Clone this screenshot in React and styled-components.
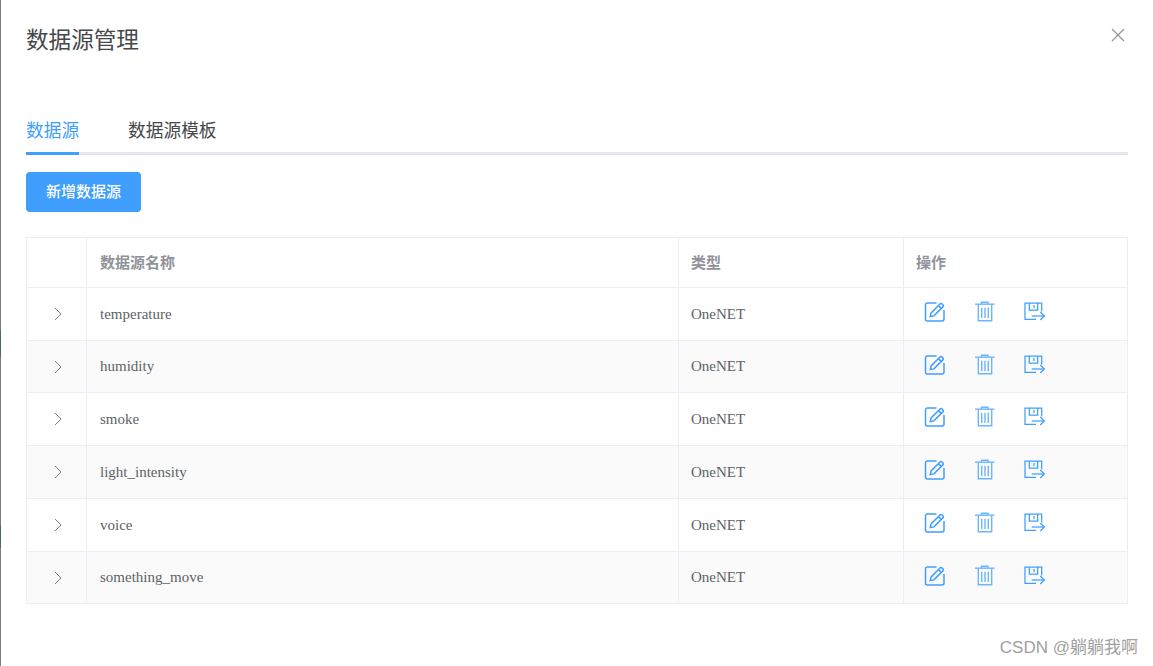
import React from "react";
import styled, { createGlobalStyle } from "styled-components";

const GlobalStyle = createGlobalStyle`
  html, body {
    margin: 0;
    padding: 0;
    background: #fff;
  }
  body {
    font-family: "Liberation Serif", "Noto Sans CJK SC", serif;
    overflow: hidden;
  }
`;

const Dialog = styled.div`
  position: relative;
  width: 1153px;
  height: 666px;
  box-sizing: border-box;
  padding: 0 25px 0 25px;
  border-left: 1px solid #7d7d7d;
  background: #fff;

  &::before {
    content: "";
    position: absolute;
    left: -1px;
    top: 0;
    width: 1px;
    height: 100%;
    background: linear-gradient(
      #7d7d7d 330px,
      #4c6b68 330px,
      #4c6b68 357px,
      #7d7d7d 357px,
      #7d7d7d 525px,
      #4c6b68 525px,
      #4c6b68 548px,
      #7d7d7d 548px
    );
  }
`;

const Header = styled.header`
  display: flex;
  align-items: flex-start;
  justify-content: space-between;
  height: 105px;
  padding-top: 24px;
  box-sizing: border-box;
`;

const Title = styled.h2`
  margin: 0;
  font: 400 22.6px/30px "Noto Sans CJK SC", sans-serif;
  color: #45474b;
`;

const Close = styled.button`
  display: flex;
  border: 0;
  padding: 0;
  margin: 4px 3px 0 0;
  background: none;
  color: #909399;
`;

const Tabs = styled.div`
  display: flex;
  gap: 49px;
  height: 47px;
  border-bottom: 3px solid #e4e7ed;
`;

const Tab = styled.div`
  height: 50px;
  box-sizing: border-box;
  padding-top: 10px;
  font: 400 17.7px/28px "Noto Sans CJK SC", sans-serif;
  color: ${(p) => (p.$active ? "#409eff" : "#45474b")};
  border-bottom: 3px solid ${(p) => (p.$active ? "#409eff" : "transparent")};
`;

const AddButton = styled.button`
  display: block;
  width: 115px;
  height: 40px;
  margin: 17px 0 25px;
  padding: 0 0 2px;
  border: 0;
  border-radius: 4px;
  background: #409eff;
  color: #fff;
  font: 500 15px/38px "Noto Sans CJK SC", sans-serif;
`;

const Table = styled.div`
  display: grid;
  grid-template-columns: 60px 592px 225px 223px;
  width: 1102px;
  box-sizing: border-box;
  border: 1px solid #ebeef5;
  border-bottom: 0;
`;

const Row = styled.div`
  display: contents;
`;

const Cell = styled.div`
  display: flex;
  align-items: center;
  box-sizing: border-box;
  height: ${(p) => p.$h}px;
  padding-left: ${(p) => p.$pad ?? 12}px;
  border-bottom: 1px solid #ebeef5;
  border-right: ${(p) => (p.$last ? "0" : "1px solid #ebeef5")};
  background: ${(p) => (p.$striped ? "#fafafa" : "#fff")};
  font-size: 15px;
  color: #606266;
`;

const HeadCell = styled(Cell)`
  padding-bottom: 2px;
  font: 700 15px "Noto Sans CJK SC", sans-serif;
  color: #909399;
`;

const Expand = styled(Cell)`
  justify-content: center;
  padding-left: 2px;
  color: #7c7f85;
`;

const Actions = styled.div`
  display: flex;
  gap: 26px;
  margin: -4px 0 0 7px;
  color: #409eff;
`;

const Watermark = styled.div`
  position: absolute;
  right: 15px;
  bottom: 7px;
  font: 400 17px/22px "Liberation Sans", "Noto Sans CJK SC", sans-serif;
  color: #a0a0a0;
`;

const EditIcon = () => (
  <svg width="24" height="24" viewBox="0 0 24 24" fill="none" stroke="currentColor" strokeWidth="1.5">
    <path d="M13.5 3H4.5a2 2 0 0 0-2 2v14a2 2 0 0 0 2 2h14.5a2 2 0 0 0 2-2V10" />
    <path d="M7.2 16.6l.9-3.6 8.9-9a1.4 1.4 0 0 1 2 0l.9.9a1.4 1.4 0 0 1 0 2l-9 9z" />
    <path d="M15.4 5.6l3 3" />
  </svg>
);

const TrashIcon = () => (
  <svg width="24" height="24" viewBox="0 0 24 24" fill="none" stroke="#6db5ff" strokeWidth="1.4">
    <path d="M2 4.2h19.5" />
    <path d="M8.5 4V2.3h6.5V4" />
    <path d="M5.3 4.5v16.2h13.4V4.5" />
    <path d="M8.7 7.7V18M12 7.7V18M15.3 7.7V18" />
  </svg>
);

const ExportIcon = () => (
  <svg width="24" height="24" viewBox="0 0 24 24" fill="none" stroke="currentColor" strokeWidth="1.25">
    <path d="M18.7 11.5V3H2v16.3h11" />
    <path d="M6.3 3v7h8.4V3" />
    <path d="M11 5v3" />
    <path d="M8.7 16h12.6" />
    <path d="M17.3 12l4 4-4 4" />
  </svg>
);

const rowHeights = [53, 52, 53, 53, 53, 52];
const rows = ["temperature", "humidity", "smoke", "light_intensity", "voice", "something_move"];

export default function App() {
  return (
    <>
      <GlobalStyle />
      <Dialog>
        <Header>
          <Title>数据源管理</Title>
          <Close aria-label="关闭">
            <svg width="14" height="14" viewBox="0 0 14 14" stroke="currentColor" strokeWidth="1.2">
              <path d="M1 1l12 12M13 1L1 13" />
            </svg>
          </Close>
        </Header>
        <Tabs>
          <Tab $active>数据源</Tab>
          <Tab>数据源模板</Tab>
        </Tabs>
        <AddButton>新增数据源</AddButton>
        <Table>
          <Row>
            <HeadCell $h={50} />
            <HeadCell $h={50} $pad={13}>数据源名称</HeadCell>
            <HeadCell $h={50}>类型</HeadCell>
            <HeadCell $h={50} $last>操作</HeadCell>
          </Row>
          {rows.map((name, i) => (
            <Row key={name}>
              <Expand $h={rowHeights[i]} $striped={i % 2 === 1}>
                <svg width="12" height="14" viewBox="0 0 12 14" fill="none" stroke="currentColor" strokeWidth="1">
                  <path d="M3 1l6 6-6 6" />
                </svg>
              </Expand>
              <Cell $h={rowHeights[i]} $pad={13} $striped={i % 2 === 1}>{name}</Cell>
              <Cell $h={rowHeights[i]} $striped={i % 2 === 1}>OneNET</Cell>
              <Cell $h={rowHeights[i]} $striped={i % 2 === 1} $last>
                <Actions>
                  <EditIcon />
                  <TrashIcon />
                  <ExportIcon />
                </Actions>
              </Cell>
            </Row>
          ))}
        </Table>
        <Watermark>CSDN @躺躺我啊</Watermark>
      </Dialog>
    </>
  );
}
